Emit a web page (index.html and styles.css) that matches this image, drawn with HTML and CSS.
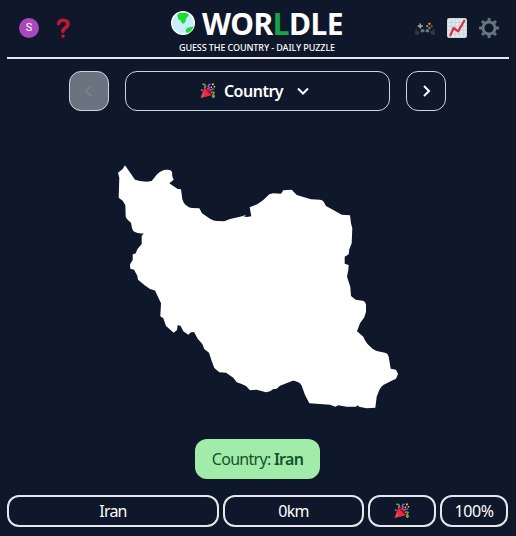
FILE: index.html
```html
<!DOCTYPE html>
<html lang="en">
<head>
<meta charset="utf-8">
<title>Worldle</title>
<link rel="stylesheet" href="styles.css">
</head>
<body>
<svg class="defs" aria-hidden="true">
  <symbol id="party" viewBox="0 0 36 36">
    <path fill="#dd2e44" d="M11 7 29 26 3 34c-2 1-2-1-1-3Z"/>
    <path fill="#ea596e" d="M12 11 9 29l-6 3 9-21Z"/>
    <path fill="#a0041e" d="M11 7c4-2 18 13 18 18s-8 1-13-4-8-11-5-14Z"/>
    <path fill="#dd2e44" d="M10 9c3 6 9 14 16 18L8 32Z"/>
    <path fill="none" stroke="#77b255" stroke-width="3" d="M5 3c7-2 8 3 5 8M25 21c7-3 8 1 5 4s1 5 4 4M29 28c-2 2 0 4 3 5"/>
    <path fill="none" stroke="#9266cc" stroke-width="3" d="M16 14c6-1 5-5 3-6s1-5 5-6M21 17c3-4 7-2 11-4"/>
    <path fill="#ffcc4d" d="M27 1h4v4h-4zM31 7h3v3h-3zM24 8h3v3h-3z"/>
    <path fill="#9266cc" d="M2 14h4v4H2z"/>
  </symbol>
</svg>
<div class="app">
  <header class="header">
    <div class="side">
      <span class="avatar">S</span>
      <svg class="icon" viewBox="0 0 36 36"><path fill="none" stroke="#be1931" stroke-width="6.6" stroke-linecap="round" stroke-linejoin="round" d="M10 10c1-5 5-6 9-6 5 0 8 3 8 7 0 7-9 6-9 13"/><circle cx="18" cy="32.5" r="3.3" fill="#be1931"/></svg>
    </div>
    <div class="brand">
      <h1 class="title">
        <svg class="globe" viewBox="0 0 24 24"><circle cx="12" cy="12" r="11.3" fill="#c8edff" stroke="#fff" stroke-width="1.4"/><path fill="#1bdd2b" d="M6.4 3.2C10 1.3 14 1.3 17.2 2.8l.6 1.7-2.5 2.8-1.3 4.1-2.3 1.5-2.3-3.6-2-.8-.8-2.8ZM22.7 15.2c-1 3.2-3 5.7-6.3 6.9l-2-2.2 1.8-3.2 3.4-.5Z"/></svg>
        <span>WOR<span class="accent">L</span>DLE</span>
      </h1>
      <div class="tagline">GUESS THE COUNTRY - DAILY PUZZLE</div>
    </div>
    <div class="side right">
      <svg class="icon" viewBox="0 0 36 36"><path fill="#31373d" d="M0 29c0-6 2-13 5-16l26 0c3 3 5 10 5 16-3 4-8 0-9-4H9C8 29 3 33 0 29Z"/><path fill="#17191c" d="M5 10c4-3 9-2 10 0h6c1-2 6-3 10 0 4 4 3 12-2 14s-8-2-8-2h-6s-4 4-9 2S1 14 5 10Z"/><path fill="#88a5b8" d="M8 10h3v3h3v3h-3v3H8v-3H5v-3h3Z"/><circle cx="13.5" cy="23" r="3.3" fill="#66757f"/><circle cx="22.5" cy="23" r="3.3" fill="#66757f"/><circle cx="26" cy="10.5" r="2" fill="#ffac33"/><circle cx="30" cy="14.5" r="2" fill="#dd2e44"/><circle cx="22" cy="14.5" r="2" fill="#55acee"/><circle cx="26" cy="18" r="2" fill="#77b255"/></svg>
      <svg class="icon" viewBox="0 0 36 36"><rect width="36" height="36" rx="4" fill="#ccd6dd"/><rect x="2" y="2" width="32" height="32" rx="2" fill="#e1e8ed"/><path stroke="#bdcbd5" stroke-width="1.3" d="M8 2v32M15 2v32M22 2v32M29 2v32M2 8h32M2 15h32M2 22h32M2 29h32"/><path fill="none" stroke="#dd2e44" stroke-width="4" stroke-linecap="round" stroke-linejoin="round" d="m6 31 6-13 8 6L31 5"/></svg>
      <svg class="icon" viewBox="0 0 36 36"><g fill="#66757f"><g id="teeth"><rect x="15.3" y="0" width="5.4" height="36" rx="1.5"/><rect x="0" y="15.3" width="36" height="5.4" rx="1.5"/></g><use href="#teeth" transform="rotate(45 18 18)"/><circle cx="18" cy="18" r="13.5"/></g><circle cx="18" cy="18" r="8.2" fill="#0f172a"/></svg>
    </div>
  </header>

  <nav class="rounds">
    <button class="step disabled"><svg class="chevron" viewBox="0 0 20 20"><path d="m12 5-5 5 5 5"/></svg></button>
    <button class="picker"><svg class="party"><use href="#party"/></svg><span>Country</span><svg class="chevron down" viewBox="0 0 20 20"><path d="m5 7.5 5 5 5-5"/></svg></button>
    <button class="step"><svg class="chevron" viewBox="0 0 20 20"><path d="m8 5 5 5-5 5"/></svg></button>
  </nav>

  <main class="map">
    <svg class="country" viewBox="110 160 296 256" role="img" aria-label="Country shape">
      <path d="M125 165.3 130 172.5 135 179.7 140 181 146.7 181.7 151.7 181 156.7 174.7Q159 172 161.7 171 164 169.7 166.7 169.7 171 169.4 172 171.7L172.3 176.3 173.7 179.7 169.3 183.3 177.7 189 181 189.3 182.3 199.3Q183.5 203.5 186 205.3 189 207.7 191.7 208L199.3 208.3 202 213.3 210 218.7Q214 221 216.7 221L224.3 221.3 230 219 240 216.7 245 215.3 246 215.8 243 216.3 247 217 251.3 216.3 249.7 207.3 257.3 204.3 263.3 200 269.3 194.3 273.3 193.3 281 193.7 283.3 190.3 291.7 189.7 296.7 195 303.3 197 311 199.3 320 199.7Q323 200 323.8 202L326 206 333.3 210 341.7 214.7 350 215.3 351 223.3 352.3 228.3 351.7 243.3 349.3 249.3 348.7 254.3 344.7 256.7V263.7L348.7 265 348.3 270 347 276.7 350.3 286.7 351 296 355.7 299.7 362.7 300.8Q365.5 301.5 366 305V311.7L364.3 317.3 360 323.3 357 331.3 363.3 336.7Q366 343 369.3 345.7 372 349 376.7 351L386 353Q388 354 388.7 356.7L390.7 368.7 396 369.7 398 374 396 378.7 391.7 380.7 383.3 385Q380.7 387 379.3 390L376.7 396.7 375.3 407.7 366.7 408.3 359 406.8 357.7 405.3 356 406.7 346.7 406.7 338.3 405.3 335.3 406.7 330 404.7 309.3 403.3 305 395 301.7 385.7Q300.5 383 298.3 382.3 295 380.3 292.7 380.7L280 385.7 276.7 388.7 273 389.2 270 391.2 266 392.3 256.7 389.7 250 390.3 246 386Q242 384 236.7 382.3L233.3 377.7 226 372.7 219.3 372.3 214.3 368 211.7 361 209 352.7 204.3 349 202.3 344 197.7 338.7 194 332 191 332.3 188.3 334.7 183.3 331.3 180.7 326 177.7 325 177 330 173.7 332.7 166 326 163.3 318.3 160.3 316.3 161 303.3 155 290.5 150 289 144.3 285 138 279.7 137.3 275.7 134 269.7 130.3 268.7 130 264.3 132.7 260 132.7 254.5 135.7 253.3 137.5 249 141.7 244V236L143.7 233.3Q138 234 135 232 132.5 231 132 228.3L131 222.7Q126.5 219 125.7 216.7L125.3 205 122.7 200.7 118.7 197.7 119.3 177.7 118 172.7 122.7 169Z"/>
    </svg>
  </main>

  <div class="answer">Country:&nbsp;<b>Iran</b></div>

  <div class="guess">
    <div class="cell">Iran</div>
    <div class="cell">0km</div>
    <div class="cell"><svg class="party"><use href="#party"/></svg></div>
    <div class="cell percent">100%</div>
  </div>
</div>
</body>
</html>
```
FILE: styles.css
```css
* { box-sizing: border-box; }
body {
  margin: 0;
  background: #0f172a;
  color: #fff;
  font: 16px/24px "Noto Sans", sans-serif;
}
.defs { display: none; }
.app {
  height: 536px;
  padding: 0 7px;
  display: flex;
  flex-direction: column;
  overflow: hidden;
}
.header {
  height: 59px;
  display: flex;
  align-items: flex-start;
  justify-content: space-between;
  border-bottom: 2px solid #e5e7eb;
}
.side {
  display: flex;
  gap: 14px;
  padding: 18px 0 0 12px;
  width: 108px;
}
.right {
  gap: 12px;
  padding: 18px 10px 0 0;
  justify-content: flex-end;
}
.icon { width: 20px; height: 20px; flex: none; }
.avatar {
  width: 20px;
  height: 20px;
  border-radius: 50%;
  background: #ab47bc;
  font: 11px/20px Roboto, sans-serif;
  text-align: center;
}
.brand {
  display: flex;
  flex-direction: column;
  align-items: center;
  padding-right: 2px;
}
.title {
  margin: 6px 0 0;
  display: flex;
  gap: 7px;
  font-size: 30px;
  line-height: 36px;
  font-weight: 700;
  letter-spacing: -0.5px;
}
.globe { width: 24px; height: 24px; margin-top: 5px; }
.accent { color: #16a34a; }
.tagline {
  font-size: 9px;
  line-height: 12px;
  font-weight: 500;
  letter-spacing: -0.1px;
  white-space: nowrap;
}
.rounds {
  display: flex;
  justify-content: center;
  gap: 16px;
  padding: 12px 1px 0 0;
}
button {
  height: 40px;
  padding: 0;
  display: flex;
  align-items: center;
  justify-content: center;
  border: 1px solid #cbd5e1;
  border-radius: 12px;
  background: transparent;
  color: #fff;
  font: 600 16px/24px "Noto Sans", sans-serif;
  letter-spacing: -0.5px;
}
.step { width: 40px; }
.disabled { background: #6b7280; color: #807f7d; }
.picker { width: 265px; gap: 8px; padding-right: 2px; }
.chevron {
  width: 20px;
  height: 20px;
  fill: none;
  stroke: currentColor;
  stroke-width: 2;
}
.down { margin-left: 2px; }
.party { width: 16px; height: 16px; }
.map {
  height: 256px;
  margin-top: 49px;
  display: flex;
  justify-content: center;
}
.country { width: 296px; height: 256px; fill: #fff; }
.answer {
  width: 125px;
  height: 40px;
  margin: 23px 0 0 188px;
  display: flex;
  align-items: center;
  justify-content: center;
  border-radius: 12px;
  background: #a0eca8;
  color: #14532d;
  letter-spacing: -0.72px;
}
.answer b { font-weight: 600; }
.guess {
  display: grid;
  grid-template-columns: 212px 141px 68px 68px;
  gap: 4px;
  margin-top: 16px;
}
.cell {
  height: 32px;
  display: flex;
  align-items: center;
  justify-content: center;
  border: 2px solid #e5e7eb;
  border-radius: 12px;
  letter-spacing: -0.8px;
}
.percent { letter-spacing: -0.4px; }
```
